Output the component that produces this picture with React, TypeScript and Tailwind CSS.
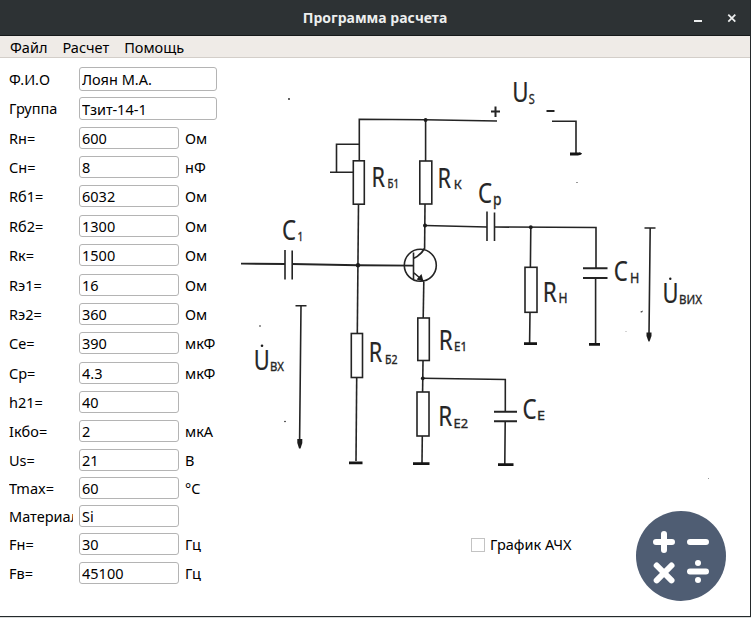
import React from "react";

type Field = { label: string; value: string; unit?: string; row: string; box: string; line?: string };

const WIDE = "h-6 w-[138px]";
const WIDE_SHORT = "h-[23px] w-[138px]";
const SMALL = "h-[22px] w-[100px]";

const fields: Field[] = [
  { label: "Ф.И.О", value: "Лоян М.А.", row: "h-[30px]", box: WIDE, line: "leading-[25px]" },
  { label: "Группа", value: "Тзит-14-1", row: "h-[30px]", box: WIDE_SHORT },
  { label: "Rн=", value: "600", unit: "Ом", row: "h-[29px]", box: SMALL },
  { label: "Сн=", value: "8", unit: "нФ", row: "h-[29px]", box: SMALL },
  { label: "Rб1=", value: "6032", unit: "Ом", row: "h-[30px]", box: SMALL },
  { label: "Rб2=", value: "1300", unit: "Ом", row: "h-[29px]", box: SMALL },
  { label: "Rк=", value: "1500", unit: "Ом", row: "h-[30px]", box: SMALL },
  { label: "Rэ1=", value: "16", unit: "Ом", row: "h-[29px]", box: SMALL },
  { label: "Rэ2=", value: "360", unit: "Ом", row: "h-[29px]", box: SMALL },
  { label: "Се=", value: "390", unit: "мкФ", row: "h-[30px]", box: SMALL },
  { label: "Ср=", value: "4.3", unit: "мкФ", row: "h-[29px]", box: SMALL },
  { label: "h21=", value: "40", row: "h-[29px]", box: SMALL },
  { label: "Iкбо=", value: "2", unit: "мкА", row: "h-[29px]", box: SMALL },
  { label: "Us=", value: "21", unit: "В", row: "h-[28px]", box: SMALL },
  { label: "Tmax=", value: "60", unit: "°C", row: "h-[28px]", box: SMALL },
  { label: "Материал", value: "Si", row: "h-[28px]", box: SMALL },
  { label: "Fн=", value: "30", unit: "Гц", row: "h-[29px]", box: SMALL },
  { label: "Fв=", value: "45100", unit: "Гц", row: "h-[29px]", box: SMALL },
];

function FieldRow({ label, value, unit, row, box, line = "leading-[23px]" }: Field) {
  return (
    <div className={`flex items-start ${row}`}>
      <span className={`h-6 w-[64px] overflow-hidden whitespace-nowrap ${line}`}>{label}</span>
      <input
        className={`ml-1.5 rounded-[3px] border border-[#b4b4b4] bg-white px-[2px] leading-5 outline-none ${box}`}
        defaultValue={value}
      />
      {unit && <span className="ml-1.5 whitespace-nowrap leading-[23px]">{unit}</span>}
    </div>
  );
}

type SymbolProps = { x: number; y: number; w: number; cap: number; children: string };

function Sym({ x, y, w, cap, children }: SymbolProps) {
  return (
    <text
      x={x}
      y={y}
      fontSize={cap / 0.714}
      textLength={w}
      lengthAdjust="spacingAndGlyphs"
      fill="#262626"
      stroke="#262626"
      strokeWidth={cap < 12 ? 0.35 : 0.2}
    >
      {children}
    </text>
  );
}

function Circuit() {
  return (
    <svg className="block h-[430px] w-[515px]" viewBox="235 58 515 430" fontFamily="'Noto Sans', sans-serif">
      <g fill="none" stroke="#242424" strokeWidth="1.6">
        <path d="M359.3 160V119.2L425 119.8L497 121" />
        <path d="M359 144.3H336.5V172M330 172.3H353" />
        <rect x="353.3" y="160.8" width="11" height="43.4" />
        <path d="M358.5 204L357.3 333" />
        <rect x="351.3" y="333.5" width="11.2" height="44" />
        <path d="M356.7 378L356 461" />
        <path d="M241 263.6L285 264M292 264L358 265.2L413 265.6" strokeWidth="1.9" />
        <path d="M285 250V279.5M292.2 250.5V279.5" />
        <path d="M295.5 305.8H306.5M301 306L299.6 441" />
        <path d="M425.6 120V161" />
        <rect x="419.8" y="161" width="12" height="43" />
        <path d="M425 204L424.6 249" />
        <path d="M425 225.5L487 227M494.5 227L596 227.5V268" />
        <path d="M487 211.5V241M494.5 212.5V241" />
        <path d="M530.8 227L530.4 267M530 312L529.6 343" />
        <rect x="525" y="267.3" width="12" height="45" />
        <path d="M595.6 278V343" />
        <path d="M583 268.2H607.5M583 278H607.5" strokeWidth="1.9" />
        <path d="M644.5 228H655.5M650.2 228L649 334" />
        <circle cx="420.3" cy="265.3" r="16" />
        <path d="M413.5 252.5V279M413.5 258.5Q421 255 424.5 248.5M413.5 272.5L424 281.5" />
        <path d="M423.8 282L423.2 318" />
        <rect x="417.8" y="318" width="11.5" height="42.5" />
        <path d="M423 361L422.6 392" />
        <rect x="417" y="392" width="12" height="44" />
        <path d="M422.3 436L422 463" />
        <path d="M423 378.3L505.3 379.5V411M505.2 421.5L504.8 464" />
        <path d="M494 411.7H517M494 421.3H517" strokeWidth="1.9" />
        <path d="M552 121.2H576V154" />
        <path d="M491 111.5H500M495.5 106.5V117M546.5 111H554.5" strokeWidth="2" />
      </g>
      <g fill="none" stroke="#151515" strokeWidth="2.8">
        <path d="M349 462.8H362.5M413 463.7H429.5M498 464.6H513.5M524 343.7H537M589 344.3H600M570 154H578Q580 153 581 154.5" />
      </g>
      <g fill="#1c1c1c">
        <path d="M297.3 439H302.3V443L300.5 448.5H299L297.3 443Z" />
        <path d="M646.5 332.5H651.5V336L649.5 341.5H648.5L646.5 336Z" />
        <path d="M423.5 281.5L416.5 279.5L421.5 274Z" />
        <circle cx="358" cy="265.2" r="2.2" />
        <circle cx="425" cy="225.5" r="2" />
        <circle cx="425.6" cy="120" r="1.9" />
        <circle cx="530.8" cy="227.2" r="1.9" />
        <circle cx="422.8" cy="378.3" r="1.9" />
        <circle cx="262" cy="345.8" r="1.3" />
        <circle cx="670.3" cy="278.8" r="1.2" />
        <circle cx="289" cy="99" r="0.9" />
        <circle cx="260" cy="326" r="0.8" />
        <circle cx="285" cy="421.5" r="0.8" />
        <circle cx="577" cy="182.5" r="0.6" />
        <circle cx="708.5" cy="478.5" r="0.5" opacity="0.6" />
        <circle cx="626" cy="331.5" r="0.5" opacity="0.5" />
        <path d="M640 312L643 310.5L642 312.5Z" />
      </g>
      <Sym x={371.5} y={187} w={13.5} cap={19}>R</Sym>
      <Sym x={387.5} y={188.3} w={11.5} cap={8.7}>Б1</Sym>
      <Sym x={437.5} y={188} w={13.5} cap={19.5}>R</Sym>
      <Sym x={453.8} y={189.3} w={8} cap={9.3}>К</Sym>
      <Sym x={512.3} y={102.3} w={16.3} cap={19}>U</Sym>
      <Sym x={528.8} y={104} w={6} cap={10}>S</Sym>
      <Sym x={478} y={203} w={14} cap={19}>C</Sym>
      <Sym x={493} y={204.5} w={8.5} cap={11.5}>p</Sym>
      <Sym x={282} y={240} w={14} cap={19.5}>C</Sym>
      <Sym x={297.5} y={241} w={5.8} cap={9.5}>1</Sym>
      <Sym x={253.7} y={369.5} w={16} cap={20}>U</Sym>
      <Sym x={270} y={371} w={14} cap={9.5}>ВХ</Sym>
      <Sym x={368.8} y={362} w={13.5} cap={19.5}>R</Sym>
      <Sym x={385} y={364.3} w={12.5} cap={9.3}>Б2</Sym>
      <Sym x={438.8} y={349.8} w={14} cap={20}>R</Sym>
      <Sym x={454} y={351} w={13} cap={9.3}>E1</Sym>
      <Sym x={438.3} y={426} w={14} cap={20}>R</Sym>
      <Sym x={453.5} y={427.7} w={14.5} cap={9.5}>E2</Sym>
      <Sym x={522.5} y={419} w={14} cap={19}>C</Sym>
      <Sym x={537} y={420} w={8} cap={9.5}>E</Sym>
      <Sym x={542.8} y={302} w={14} cap={20}>R</Sym>
      <Sym x={558.5} y={303} w={9} cap={9.7}>H</Sym>
      <Sym x={613.8} y={281} w={14} cap={20}>C</Sym>
      <Sym x={630} y={282.5} w={9.3} cap={9.7}>H</Sym>
      <Sym x={662.5} y={302.5} w={16} cap={20}>U</Sym>
      <Sym x={679} y={304} w={23} cap={9.3}>ВИХ</Sym>
    </svg>
  );
}

function CalculateButton() {
  return (
    <button className="block h-[90px] w-[90px]" aria-label="Расчет">
      <svg viewBox="0 0 90 90" className="h-[90px] w-[90px]">
        <circle cx="45" cy="45" r="45" fill="#4f5d73" />
        <g stroke="#fff" strokeWidth="6" strokeLinecap="round">
          <path d="M20 31H36M28 23V39M54 31H70M54 60.5H70" />
          <path d="M20.7 54.5L35.5 69.3M35.5 54.5L20.7 69.3" />
        </g>
        <circle cx="62" cy="52" r="3" fill="#fff" />
        <circle cx="62" cy="69" r="3" fill="#fff" />
      </svg>
    </button>
  );
}

export default function App() {
  return (
    <div className="flex h-[618px] w-[751px] flex-col overflow-hidden bg-[#d8dad9] font-['Noto_Sans',sans-serif] text-[14.5px] text-black">
      <div className="flex h-[617px] flex-col border-r border-b border-[#24292b] bg-white">
        <header className="flex h-9 items-center border-b border-[#15191a] bg-[#2d3234] text-[#eceeee]">
          <div className="w-[60px]" />
          <h1 className="flex-1 text-center text-[14px] font-bold leading-5">Программа расчета</h1>
          <div className="flex w-[60px] items-center">
            <svg className="h-4 w-[60px]" viewBox="690 9 60 16" fill="none" stroke="#eceeee">
              <path d="M694 20H702" strokeWidth="2" />
              <path d="M728.3 13.6L735.3 20.6M735.3 13.6L728.3 20.6" strokeWidth="1.8" />
            </svg>
          </div>
        </header>
        <nav className="flex h-[22px] items-center gap-[15px] border-b border-[#d3cec9] bg-[#efebe7] pl-[10px] leading-5">
          <span>Файл</span>
          <span>Расчет</span>
          <span>Помощь</span>
        </nav>
        <main className="flex flex-1">
          <form className="w-[235px] pt-[9px] pl-[9px]">
            {fields.map((f) => (
              <FieldRow key={f.label} {...f} />
            ))}
          </form>
          <section className="w-[515px]">
            <Circuit />
            <div className="flex items-start pt-[23px]">
              <label className="mt-[22px] ml-[236px] flex h-6 w-[165px] items-center gap-[5px]">
                <span className="h-[14px] w-[14px] border border-[#c3c3c3] bg-white" />
                <span className="-mt-px whitespace-nowrap">График АЧХ</span>
              </label>
              <CalculateButton />
            </div>
          </section>
        </main>
      </div>
    </div>
  );
}
